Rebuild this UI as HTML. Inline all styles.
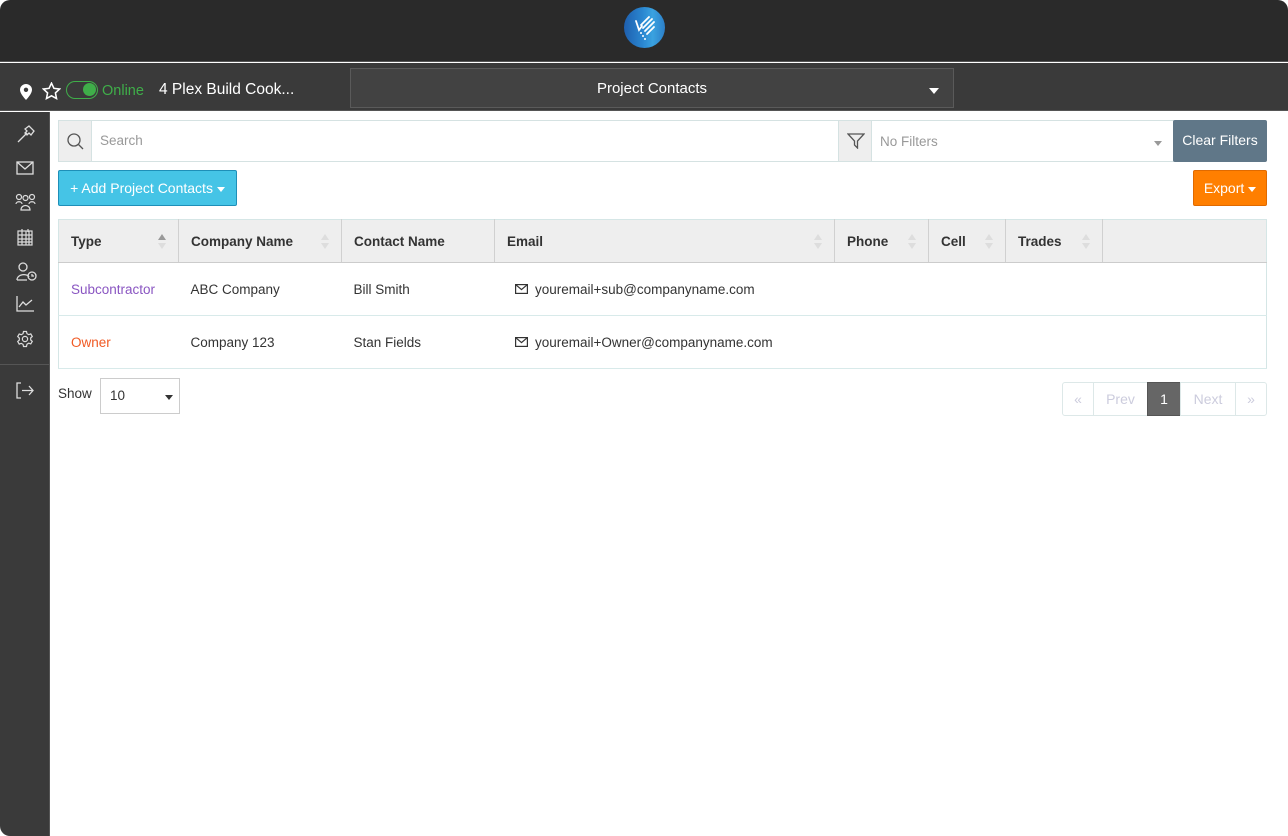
<!DOCTYPE html>
<html><head><meta charset="utf-8"><style>
*{box-sizing:border-box;margin:0;padding:0}
html,body{width:1288px;height:836px;background:#fff;overflow:hidden;font-family:"Liberation Sans",sans-serif;font-size:13.5px;color:#333}
.frame{position:absolute;left:0;top:0;width:1288px;height:836px;border-radius:10px;overflow:hidden;background:#fff}
.top{position:absolute;left:0;top:0;width:1288px;height:62px;background:#2a2a2a;border-bottom:1px solid #555}
.logo{position:absolute;left:624px;top:7px;width:41px;height:41px;border-radius:50%;background:linear-gradient(90deg,#1e5fae,#2a86d0 45%,#3aa2e0 70%,#2c7fc8)}
.bar2{position:absolute;left:0;top:63px;width:1288px;height:48px;background:#3a3a3a;border-bottom:1px solid #555}
.side{position:absolute;left:0;top:112px;width:50px;height:724px;background:#3a3a3a;border-right:1px solid #555}
.side svg{position:absolute;left:16px}
.sel{position:absolute;left:350px;top:68px;width:604px;height:40px;border:1px solid #5a5a5a;background:#424242;color:#fff;font-size:15px;text-align:center;line-height:40px}
.abs{position:absolute}
.search{position:absolute;left:58px;top:120px;width:1116px;height:42px;border:1px solid #d5e2e2;background:#fff}
.btn{position:absolute;color:#fff;font-size:14px;text-align:center}
table{position:absolute;left:58px;top:219px;width:1209px;border-collapse:collapse;border:1px solid #d5e6e6}
th{background:#eee;height:43px;text-align:left;font-weight:bold;color:#333;padding-left:12px;border-right:1px solid #d0d0d0;border-bottom:1px solid #ccc;position:relative;font-size:13.5px}
td{height:53px;padding-left:12px;border-bottom:1px solid #d8eaea}
.ar{position:absolute;right:12px;top:14px;width:8px;height:16px}
.ar:before{content:"";position:absolute;left:0;top:0;border:4px solid transparent;border-bottom:6px solid #ddd;border-top:0}
.ar:after{content:"";position:absolute;left:0;top:9px;border:4px solid transparent;border-top:6px solid #ddd;border-bottom:0}
.ar.on:before{border-bottom-color:#999}
.pg{position:absolute;top:382px;height:34px;border:1px solid #dde8e8;line-height:32px;text-align:center;color:#ccd;font-size:14px}
</style></head><body><div class="frame">
<div class="top"><div class="logo"><svg width="41" height="41" viewBox="0 0 41 41"><g stroke="#fff" stroke-width="1.8" fill="none" stroke-linecap="round"><path d="M12 14l3 9 3-4"/><path d="M17 18l8-8"/><path d="M19 21l9-9"/><path d="M21 24l9-9"/><path d="M23 27l7-7"/></g><circle cx="17" cy="26" r="1" fill="#fff"/><circle cx="19" cy="29" r="1" fill="#fff"/><circle cx="21" cy="32" r="1" fill="#fff"/></svg></div></div>
<div class="bar2">
<svg class="abs" style="left:20px;top:21px" width="12" height="16" viewBox="0 0 12 16"><path d="M6 0C2.7 0 0 2.6 0 5.8 0 10 6 16 6 16s6-6 6-10.2C12 2.6 9.3 0 6 0z" fill="#fff"/><circle cx="6" cy="5.8" r="2.2" fill="#3a3a3a"/></svg>
<svg class="abs" style="left:42px;top:19px" width="19" height="18" viewBox="0 0 24 23"><path d="M12 1.5l3.1 6.6 7.2.9-5.3 5 1.4 7.1L12 17.6l-6.4 3.5 1.4-7.1-5.3-5 7.2-.9z" fill="none" stroke="#fff" stroke-width="2"/></svg>
<div class="abs" style="left:66px;top:18px;width:32px;height:18px;border:1.5px solid #3fae49;border-radius:9px"><div style="position:absolute;right:1px;top:1px;width:13px;height:13px;border-radius:50%;background:#3fae49"></div></div>
<div class="abs" style="left:102px;top:20px;color:#3fae49;font-size:14.5px">Online</div>
<div class="abs" style="left:159px;top:18px;color:#fff;font-size:15.5px">4 Plex Build Cook...</div>
</div>
<div class="sel">Project Contacts<span style="position:absolute;right:14px;top:19px;border:5px solid transparent;border-top:6px solid #fff;border-bottom:0"></span></div>
<div class="side">
<svg style="top:12px" width="20" height="20" viewBox="0 0 20 20" fill="none" stroke="#ddd" stroke-width="1.3"><path d="M2 18l9-9M9 5l4-3 5 5-3 4-2-2-2 2-2-2 2-2z"/></svg>
<svg style="top:49px" width="18" height="14" viewBox="0 0 18 14" fill="none" stroke="#ddd" stroke-width="1.3"><rect x="1" y="1" width="16" height="12"/><path d="M1 1l8 7 8-7"/></svg>
<svg style="top:81px;left:15px" width="21" height="18" viewBox="0 0 21 18" fill="none" stroke="#ddd" stroke-width="1.2"><circle cx="4" cy="4" r="2.5"/><circle cx="10.5" cy="5" r="2.5"/><circle cx="17" cy="4" r="2.5"/><path d="M1 11c0-3 6-3 6 0M14 11c0-3 6-3 6 0M6 17c0-6 9-6 9 0z"/></svg>
<svg style="top:116px" width="18" height="18" viewBox="0 0 18 18" fill="none" stroke="#ddd" stroke-width="1.2"><rect x="2" y="3" width="14" height="14"/><path d="M2 7h14M2 11h14M2 14h14M6 3v14M10 3v14M13 3v14M6 1v3M12 1v3"/></svg>
<svg style="top:150px" width="21" height="19" viewBox="0 0 21 19" fill="none" stroke="#ddd" stroke-width="1.3"><circle cx="7" cy="5" r="4"/><path d="M1 18c0-6 10-7 12-3M1 18h10"/><circle cx="16" cy="14" r="4"/><path d="M16 12v2h2"/></svg>
<svg style="top:184px" width="18" height="16" viewBox="0 0 18 16" fill="none" stroke="#ddd" stroke-width="1.3"><path d="M1 0v15h17M3 11l4-5 3 3 6-5"/></svg>
<svg style="top:218px" width="18" height="18" viewBox="0 0 24 24" fill="none" stroke="#ddd" stroke-width="1.6"><circle cx="12" cy="12" r="3.5"/><path d="M10 2h4l.6 2.8 2.4 1.4 2.7-1 2 3.4-2.1 1.9v2.8l2.1 1.9-2 3.4-2.7-1-2.4 1.4L14 22h-4l-.6-2.8-2.4-1.4-2.7 1-2-3.4 2.1-1.9v-2.8L2.3 8.7l2-3.4 2.7 1 2.4-1.4z"/></svg>
<div style="position:absolute;left:0;top:252px;width:50px;border-top:1px solid #555"></div>
<svg style="top:270px" width="18" height="17" viewBox="0 0 18 17" fill="none" stroke="#ddd" stroke-width="1.3"><path d="M5 1H1v15h4M6 8.5h11M13 4l4 4.5-4 4.5"/></svg>
</div>
<div class="search">
<div class="abs" style="left:0;top:0;width:33px;height:40px;background:#eee;border-right:1px solid #d5e2e2"><svg style="position:absolute;left:8px;top:12px" width="17" height="17" viewBox="0 0 17 17" fill="none" stroke="#555" stroke-width="1.3"><circle cx="7" cy="7" r="6"/><path d="M11.5 11.5l4.5 4.5"/></svg></div>
<div class="abs" style="left:41px;top:12px;color:#999">Search</div>
<div class="abs" style="left:779px;top:0;width:34px;height:40px;background:#eee;border-left:1px solid #d5e2e2;border-right:1px solid #d5e2e2"><svg style="position:absolute;left:8px;top:12px" width="18" height="16" viewBox="0 0 18 16" fill="none" stroke="#555" stroke-width="1.3"><path d="M1 1h16l-6.5 7v7l-3-3V8z"/></svg></div>
<div class="abs" style="left:821px;top:13px;color:#999">No Filters</div>
<span class="abs" style="left:1095px;top:20px;border:4px solid transparent;border-top:5px solid #999;border-bottom:0"></span>
</div>
<div class="btn" style="left:1173px;top:120px;width:94px;height:42px;background:#607788;border-radius:2px;line-height:41px">Clear Filters</div>
<div class="btn" style="left:58px;top:170px;width:179px;height:36px;background:#45c4e6;border:1px solid #1e8fb8;border-radius:2px;line-height:34px">+ Add Project Contacts <span style="display:inline-block;vertical-align:middle;border:4px solid transparent;border-top:5px solid #fff;border-bottom:0"></span></div>
<div class="btn" style="left:1193px;top:170px;width:74px;height:36px;background:#ff7f00;border:1px solid #e06a00;border-radius:2px;line-height:34px">Export <span style="display:inline-block;vertical-align:middle;border:4px solid transparent;border-top:5px solid #fff;border-bottom:0"></span></div>
<table>
<tr><th style="width:120px">Type<span class="ar on"></span></th><th style="width:163px">Company Name<span class="ar"></span></th><th style="width:153px">Contact Name</th><th style="width:340px">Email<span class="ar"></span></th><th style="width:94px">Phone<span class="ar"></span></th><th style="width:77px">Cell<span class="ar"></span></th><th style="width:97px">Trades<span class="ar"></span></th><th style="border-right:0"></th></tr>
<tr><td style="color:#8a56c2">Subcontractor</td><td>ABC Company</td><td>Bill Smith</td><td style="padding-left:20px"><svg width="13" height="10" viewBox="0 0 13 10" fill="none" stroke="#333" stroke-width="1.2"><rect x=".6" y=".6" width="11.8" height="8.8"/><path d="M.6 .6l5.9 5 5.9-5"/></svg>&nbsp; youremail+sub@companyname.com</td><td></td><td></td><td></td><td></td></tr>
<tr><td style="color:#f05a24">Owner</td><td>Company 123</td><td>Stan Fields</td><td style="padding-left:20px"><svg width="13" height="10" viewBox="0 0 13 10" fill="none" stroke="#333" stroke-width="1.2"><rect x=".6" y=".6" width="11.8" height="8.8"/><path d="M.6 .6l5.9 5 5.9-5"/></svg>&nbsp; youremail+Owner@companyname.com</td><td></td><td></td><td></td><td></td></tr>
</table>
<div class="abs" style="left:58px;top:386px">Show</div>
<div class="abs" style="left:100px;top:378px;width:80px;height:36px;border:1px solid #ccc;line-height:34px;padding-left:9px">10<span style="position:absolute;right:6px;top:16px;border:4px solid transparent;border-top:5px solid #333;border-bottom:0"></span></div>
<div class="pg" style="left:1062px;width:32px;border-radius:3px 0 0 3px">«</div>
<div class="pg" style="left:1093px;width:55px">Prev</div>
<div class="pg" style="left:1147px;width:34px;background:#666;border-color:#555;color:#fff">1</div>
<div class="pg" style="left:1180px;width:56px">Next</div>
<div class="pg" style="left:1235px;width:32px;border-radius:0 3px 3px 0">»</div>
</div></body></html>
